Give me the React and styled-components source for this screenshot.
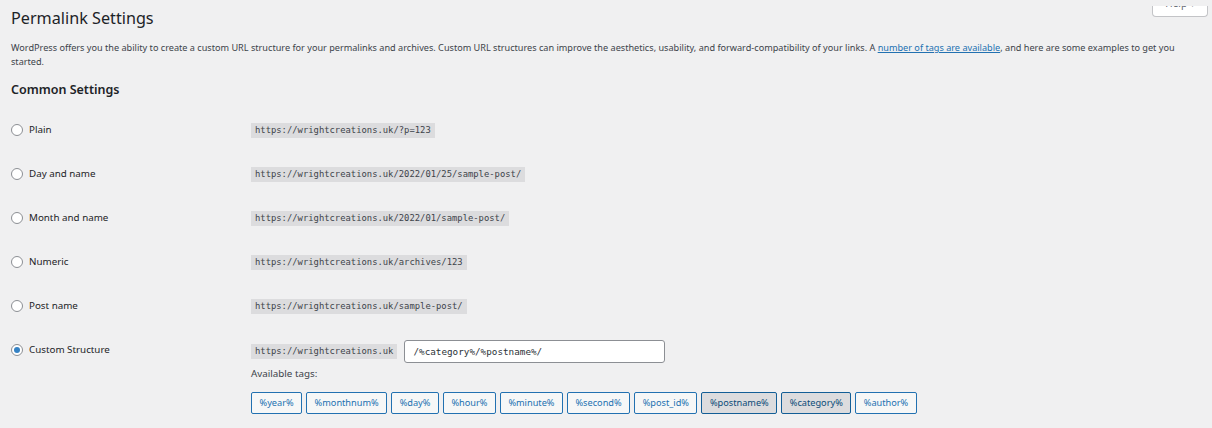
import React from "react";
import styled, { createGlobalStyle, css } from "styled-components";

const Global = createGlobalStyle`
  html, body { margin: 0; padding: 0; background: #f0f0f1; }
  body {
    font-family: "Noto Sans", "Open Sans", sans-serif;
    color: #3c434a;
    font-size: 10px;
  }
`;

const Wrap = styled.div`
  position: relative;
  padding: 0 16px 20px 11px;
  min-height: 428px;
  box-sizing: border-box;
`;

const HelpTab = styled.button`
  position: absolute;
  top: -1px;
  right: 4px;
  width: 56px;
  height: 11px;
  border: 1px solid #c3c4c7;
  border-top: none;
  border-radius: 0 0 4px 4px;
  background: #fff;
  color: #646970;
  font-family: inherit;
  font-size: 10px;
  line-height: 1;
  padding: 0;
  overflow: hidden;
  display: flex;
  justify-content: center;
  align-items: flex-end;
  & span { transform: translateY(-8px); }
`;

const Title = styled.h1`
  margin: 7px 0 0;
  font-size: 16.2px;
  font-weight: 400;
  line-height: 23px;
  color: #1d2327;
`;

const Intro = styled.p`
  margin: 11px 0 0;
  font-size: 9.15px;
  line-height: 14px;
`;

const Link = styled.a`
  color: #2271b1;
  text-decoration: underline;
`;

const Heading = styled.h2`
  margin: 12px 0 0;
  font-size: 12.5px;
  font-weight: 600;
  line-height: 17px;
  color: #1d2327;
`;

const Form = styled.div`
  margin-top: 10px;
`;

const Row = styled.div`
  display: grid;
  grid-template-columns: 240px 1fr;
  min-height: 44px;
  align-items: ${(p) => (p.$top ? "start" : "center")};
`;

const Choice = styled.label`
  display: flex;
  align-items: center;
  gap: 6px;
  line-height: 14px;
  color: #1d2327;
  font-size: 9.8px;
  ${(p) => p.$top && css`padding-top: 15px;`}
`;

const Radio = styled.span`
  width: 10px;
  height: 10px;
  border: 1px solid #8c8f94;
  border-radius: 50%;
  background: #fff;
  display: flex;
  align-items: center;
  justify-content: center;
  flex: none;
  &::after {
    content: "";
    width: 6px;
    height: 6px;
    border-radius: 50%;
    background: ${(p) => (p.$on ? "#3582c4" : "transparent")};
  }
`;

const Code = styled.code`
  display: inline-block;
  background: #dcdcde;
  padding: 1px 4px;
  font-family: "DejaVu Sans Mono", "Liberation Mono", monospace;
  font-size: 8.85px;
  line-height: 13px;
  color: #3c434a;
`;

const Cell = styled.div`
  ${(p) => p.$top && css`padding-top: 12px;`}
`;

const InputLine = styled.div`
  display: flex;
  align-items: center;
  gap: 7px;
`;

const TextInput = styled.input`
  width: 261px;
  height: 23px;
  box-sizing: border-box;
  border: 1px solid #8c8f94;
  border-radius: 3px;
  background: #fff;
  padding: 0 8px;
  font-family: "DejaVu Sans Mono", "Liberation Mono", monospace;
  font-size: 9.3px;
  color: #2c3338;
  outline: none;
`;

const TagsLabel = styled.div`
  margin-top: 4px;
  line-height: 14px;
  font-size: 9.8px;
  color: #3c434a;
`;

const Tags = styled.div`
  display: flex;
  gap: 4px;
  margin-top: 11px;
`;

const Tag = styled.button`
  height: 22px;
  box-sizing: border-box;
  padding: 0 7.5px;
  border: 1px solid ${(p) => (p.$active ? "#135e96" : "#2271b1")};
  border-radius: 2px;
  background: ${(p) => (p.$active ? "#dcdcde" : "#f6f7f7")};
  color: ${(p) => (p.$active ? "#0a4b78" : "#2271b1")};
  font-family: "Noto Sans", sans-serif;
  font-size: 9.2px;
  line-height: 20px;
  cursor: pointer;
`;

const base = "https://wrightcreations.uk";
const options = [
  { label: "Plain", url: `${base}/?p=123` },
  { label: "Day and name", url: `${base}/2022/01/25/sample-post/` },
  { label: "Month and name", url: `${base}/2022/01/sample-post/` },
  { label: "Numeric", url: `${base}/archives/123` },
  { label: "Post name", url: `${base}/sample-post/` },
];

const tags = [
  "%year%",
  "%monthnum%",
  "%day%",
  "%hour%",
  "%minute%",
  "%second%",
  "%post_id%",
  "%postname%",
  "%category%",
  "%author%",
];
const activeTags = ["%postname%", "%category%"];

export default function App() {
  return (
    <>
      <Global />
      <Wrap>
        <HelpTab>
          <span>Help ▾</span>
        </HelpTab>
        <Title>Permalink Settings</Title>
        <Intro>
          WordPress offers you the ability to create a custom URL structure for
          your permalinks and archives. Custom URL structures can improve the
          aesthetics, usability, and forward-compatibility of your links. A{" "}
          <Link href="#">number of tags are available</Link>, and here are some
          examples to get you started.
        </Intro>
        <Heading>Common Settings</Heading>
        <Form>
          {options.map((o) => (
            <Row key={o.label}>
              <Choice>
                <Radio />
                {o.label}
              </Choice>
              <div>
                <Code>{o.url}</Code>
              </div>
            </Row>
          ))}
          <Row $top>
            <Choice $top>
              <Radio $on />
              Custom Structure
            </Choice>
            <Cell $top>
              <InputLine>
                <Code>{base}</Code>
                <TextInput defaultValue="/%category%/%postname%/" />
              </InputLine>
              <TagsLabel>Available tags:</TagsLabel>
              <Tags>
                {tags.map((t) => (
                  <Tag key={t} $active={activeTags.includes(t)}>
                    {t}
                  </Tag>
                ))}
              </Tags>
            </Cell>
          </Row>
        </Form>
      </Wrap>
    </>
  );
}
